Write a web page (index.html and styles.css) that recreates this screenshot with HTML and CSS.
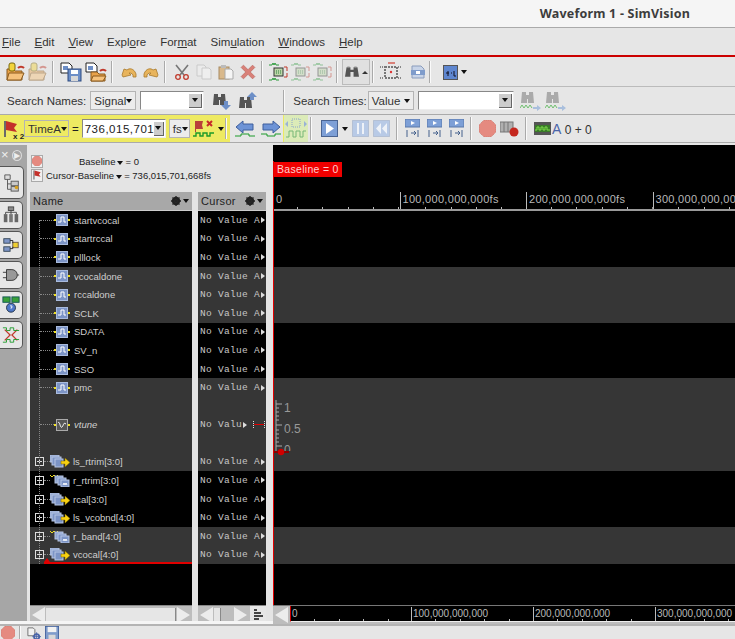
FILE: index.html
```html
<!DOCTYPE html>
<html lang="en">
<head>
  <meta charset="UTF-8" />
  <title>Waveform 1 - SimVision</title>
  <link rel="stylesheet" href="styles.css">
</head>
<body>
  <svg class="defs" xmlns="http://www.w3.org/2000/svg">
    <symbol id="i-open" viewBox="0 0 20 20"><path d="M1 7h6l2 2h7v9H1z" fill="#e9a24a" stroke="#8a5a1e"/><path d="M3 11h15l-3 7H1z" fill="#f6c27c" stroke="#8a5a1e"/><rect x="3" y="1" width="6" height="8" rx="2" fill="#f3d43c" stroke="#7a6a10"/><path d="M12 6a4 4 0 0 1 6 0" fill="none" stroke="#c0392b" stroke-width="2"/></symbol>
    <symbol id="i-save" viewBox="0 0 22 20"><path d="M1 1h8l3 3v7H1z" fill="#fff" stroke="#222"/><rect x="3" y="4" width="5" height="4" fill="#6d8fc7"/><rect x="8" y="7" width="13" height="12" fill="#6d8fc7" stroke="#2d4a80"/><rect x="11" y="8" width="7" height="4" fill="#fff"/><rect x="11" y="14" width="7" height="5" fill="#d8d8d8"/></symbol>
    <symbol id="i-savedb" viewBox="0 0 22 20"><path d="M1 1h8l3 3v6H1z" fill="#fff" stroke="#222"/><rect x="3" y="4" width="5" height="4" fill="#6d8fc7"/><path d="M6 10h6l2 2h6v7H6z" fill="#e9a24a" stroke="#8a5a1e"/><path d="M8 14h13l-3 5H6z" fill="#f6c27c" stroke="#8a5a1e"/><path d="M15 9a4 4 0 0 1 6 0" fill="none" stroke="#c0392b" stroke-width="2"/></symbol>
    <symbol id="i-undo" viewBox="0 0 16 12"><path d="M1 9l2-6 3 1C8 2 13 2 15 8v3h-3V9C11 7 9 7 8 7l2 2-8 2z" fill="#e8b45c" stroke="#a87a2c" stroke-width=".8"/></symbol>
    <symbol id="i-redo" viewBox="0 0 16 12"><path d="M15 9l-2-6-3 1C8 2 3 2 1 8v3h3V9c1-2 3-2 4-2L6 9l8 2z" fill="#e8b45c" stroke="#a87a2c" stroke-width=".8"/></symbol>
    <symbol id="i-cut" viewBox="0 0 16 16"><path d="M2 1l8 10M14 1L6 11" stroke="#777" stroke-width="1.6" fill="none"/><circle cx="4" cy="13" r="2.3" fill="none" stroke="#c0392b" stroke-width="1.3"/><circle cx="12" cy="13" r="2.3" fill="none" stroke="#c0392b" stroke-width="1.3"/></symbol>
    <symbol id="i-copy" viewBox="0 0 16 16"><path d="M1 1h7l2 2v9H1z" fill="#f2f2f2" stroke="#aaa"/><path d="M6 4h7l2 2v9H6z" fill="#f8f8f8" stroke="#aaa"/></symbol>
    <symbol id="i-paste" viewBox="0 0 16 16"><rect x="1" y="3" width="10" height="12" fill="#d9b98c" stroke="#a88a60"/><path d="M7 5h6l2 2v8H7z" fill="#f5f5f5" stroke="#aaa"/><rect x="3" y="1" width="5" height="3" fill="#bbb"/></symbol>
    <symbol id="i-del" viewBox="0 0 14 14"><path d="M1 3l2-2 4 4 4-4 2 2-4 4 4 4-2 2-4-4-4 4-2-2 4-4z" fill="#d98078" stroke="#b9645c" stroke-width=".6"/></symbol>
    <symbol id="i-sch" viewBox="0 0 19 20"><path d="M0 3h3l1-2 1 2 1-2 1 2h3M0 18h3l1-2 1 2 1-2 1 2h3" fill="none" stroke="#2a9a3a"/><rect x="5" y="6" width="9" height="8" fill="#bcd6a8" stroke="#333"/><path d="M7 9h5M7 11h5" stroke="#2a7a3a" stroke-dasharray="1 1"/><path d="M15 5h3v4M15 15h3v-4" fill="none" stroke="#c0392b"/></symbol>
    <symbol id="i-binoc" viewBox="0 0 18 16"><path d="M2 2h5v3h4V2h5l2 12h-7V8H7v6H0z" fill="#555"/><rect x="3" y="1" width="3" height="2" fill="#888"/><rect x="12" y="1" width="3" height="2" fill="#888"/></symbol>
    <symbol id="i-binocdown" viewBox="0 0 18 18"><path d="M1 2h4v3h3V2h4l1 11H7V8H6v5H0z" fill="#555"/><path d="M11 9h4v4h3l-5 5-5-5h3z" fill="#6d8fc7"/></symbol>
    <symbol id="i-binocup" viewBox="0 0 18 18"><path d="M1 5h4v3h3V5h4l1 11H7v-5H6v5H0z" fill="#555"/><path d="M11 8h4V5h3l-5-5-5 5h3z" fill="#6d8fc7"/></symbol>
    <symbol id="i-binocwave" viewBox="0 0 21 20"><path d="M2 1h4v3h3V1h4l1 11H8V8H7v4H1z" fill="#aaa"/><path d="M0 17l2-3 2 3 2-3 2 3 2-3 2 3" fill="none" stroke="#6fbf6f"/><path d="M13 16h4v-2l4 3-4 3v-2h-4z" fill="#a9bfdd"/></symbol>
    <symbol id="i-zoom" viewBox="0 0 22 20"><rect x="5" y="5" width="12" height="11" fill="none" stroke="#777" stroke-dasharray="2 1" stroke-width="2"/><rect x="8" y="0" width="7" height="2" fill="#d98078"/><circle cx="11" cy="10" r="1.2" fill="#d33"/><path d="M0 5h4M18 5h4M0 16h4M18 16h4" stroke="#888" stroke-dasharray="1 1" stroke-width="2"/></symbol>
    <symbol id="i-doc" viewBox="0 0 14 14"><path d="M1 1h9l3 3v9H1z" fill="#c8d4e8" stroke="#8a9cbc"/><rect x="0" y="5" width="14" height="5" fill="#7f9ccb"/><rect x="5" y="6" width="4" height="3" fill="#fff"/></symbol>
    <symbol id="i-tx" viewBox="0 0 15 15"><rect x=".5" y=".5" width="14" height="14" fill="#5e86cf" stroke="#555"/><path d="M3 8h3M5 6v5M8 8h1M11 6v5h2" stroke="#112" fill="none"/></symbol>
    <symbol id="i-flag" viewBox="0 0 15 18"><path d="M2 1v16" stroke="#6a6a6a" stroke-width="2"/><path d="M3 1l11 3-3 4 3 4-11-2z" fill="#c4302b"/></symbol>
    <symbol id="i-flagwave" viewBox="0 0 22 18"><path d="M2 1h8l-1 4 1 4H3v3H2z" fill="#b8403a"/><path d="M0 16h3v-3h4v3h3v-3h4v3h3v-3h4" fill="none" stroke="#1d9a2a" stroke-width="1.4"/><path d="M14 1l5 5m0-5l-5 5" stroke="#c62b2b" stroke-width="2"/></symbol>
    <symbol id="i-left" viewBox="0 0 20 18"><path d="M1 7l7-6v3h10v6H8v3z" fill="#6d93d6" stroke="#3f5f9c"/><path d="M0 16h6v-2h8v2h6" fill="none" stroke="#1d9a2a"/></symbol>
    <symbol id="i-right" viewBox="0 0 20 18"><path d="M19 7l-7-6v3H2v6h10v3z" fill="#6d93d6" stroke="#3f5f9c"/><path d="M0 14h6v2h8v-2h6" fill="none" stroke="#1d9a2a"/></symbol>
    <symbol id="i-scan" viewBox="0 0 22 22"><path d="M0 6l3-3v6zM22 6l-3-3v6z" fill="#9ab2d6"/><rect x="7" y="1" width="8" height="8" fill="none" stroke="#8aa4cc" stroke-dasharray="1 1"/><path d="M1 19h3v-6h4v6h3v-6h4v6h3v-6h3" fill="none" stroke="#77b777"/></symbol>
    <symbol id="i-play" viewBox="0 0 17 17"><rect x=".5" y=".5" width="16" height="16" fill="#7d9fd6" stroke="#4a6492"/><path d="M5 3l8 5.5L5 14z" fill="#fff"/></symbol>
    <symbol id="i-pause" viewBox="0 0 17 17"><rect x=".5" y=".5" width="16" height="16" fill="#b8cae6" stroke="#98a8c2" stroke-dasharray="1 1"/><path d="M5 3h2v11H5zM10 3h2v11h-2z" fill="#eef2f8"/></symbol>
    <symbol id="i-rew" viewBox="0 0 17 17"><rect x=".5" y=".5" width="16" height="16" fill="#b8cae6" stroke="#98a8c2" stroke-dasharray="1 1"/><path d="M8 3L3 8.5 8 14zM14 3L9 8.5l5 5.5z" fill="#eef2f8"/></symbol>
    <symbol id="i-step" viewBox="0 0 15 19"><rect x="0" y="0" width="15" height="8" fill="#7d9fd6" stroke="#5a78aa"/><path d="M6 2l4 2-4 2z" fill="#fff"/><path d="M2 11v7M13 11v7M6 14h5M9 12l2 2-2 2" stroke="#44608c" fill="none"/></symbol>
    <symbol id="i-rec" viewBox="0 0 17 17"><path d="M5 0h7l5 5v7l-5 5H5l-5-5V5z" fill="#e58a80" stroke="#cc7a70" stroke-dasharray="1 1"/></symbol>
    <symbol id="i-recdoc" viewBox="0 0 19 16"><rect x="0" y="1" width="13" height="10" fill="#b0b0b0" stroke="#777"/><path d="M4 1v10M8 1v10" stroke="#777"/><circle cx="14" cy="11" r="4.5" fill="#c5281f"/></symbol>
    <symbol id="i-wave" viewBox="0 0 17 13"><rect width="17" height="13" fill="#555"/><rect x="1" y="3" width="15" height="7" fill="#3a7a2a"/><path d="M1 8h2V5h2v3h2V5h2v3h2V5h2v3h3" fill="none" stroke="#7ee04a"/></symbol>
    <symbol id="i-gear" viewBox="0 0 10 10"><circle cx="5" cy="5" r="3" fill="none" stroke="#222" stroke-width="2.4"/><path d="M5 0v10M0 5h10M1.5 1.5l7 7M8.5 1.5l-7 7" stroke="#222" stroke-width="1.3"/></symbol>
    <symbol id="i-signal" viewBox="0 0 16 12"><rect x="2.5" y=".5" width="11" height="11" fill="#7c94c6" stroke="#a9bbdd"/><path d="M4 8h3V3h3v5h2" fill="none" stroke="#fff"/><rect x="0" y="5" width="2" height="2" fill="#f0e020"/><rect x="14" y="5" width="2" height="2" fill="#f0e020"/></symbol>
    <symbol id="i-analog" viewBox="0 0 16 12"><rect x="2.5" y=".5" width="11" height="11" fill="#555" stroke="#aaa"/><path d="M4 4c2-3 2 6 4 4s1-5 4-3" fill="none" stroke="#fff"/><rect x="0" y="5" width="2" height="2" fill="#f0e020"/><rect x="14" y="5" width="2" height="2" fill="#f0e020"/></symbol>
    <symbol id="i-bus" viewBox="0 0 20 13"><rect x="0" y="0" width="9" height="7" fill="#8fa5d0" stroke="#b7c6e4"/><rect x="2" y="2" width="9" height="8" fill="#7c94c6" stroke="#b7c6e4"/><rect x="5" y="4" width="8" height="8" fill="#7c94c6" stroke="#b7c6e4"/><path d="M11 6h4V3l5 4.5L15 12V9h-4z" fill="#f7d012" stroke="#7a6400" stroke-width=".5"/></symbol>
    <symbol id="i-busy" viewBox="0 0 20 13"><path d="M0 1l2 2 2-2 2 2 2-2" stroke="#f0e020" fill="none"/><rect x="5" y="2" width="8" height="7" fill="#8fa5d0" stroke="#b7c6e4"/><rect x="8" y="4" width="8" height="7" fill="#7c94c6" stroke="#b7c6e4"/><rect x="11" y="6" width="8" height="7" fill="#7c94c6" stroke="#b7c6e4"/><path d="M13 11l1-2 1 2 1-2 1 2" stroke="#fff" fill="none"/></symbol>
    <symbol id="i-floppy" viewBox="0 0 16 16"><rect x=".5" y=".5" width="15" height="15" fill="#7f9ccb" stroke="#3f5f9c"/><rect x="3" y="1" width="10" height="6" fill="#f2f2f2"/><rect x="4" y="10" width="8" height="6" fill="#d8d8d8"/></symbol>
    <symbol id="i-docgear" viewBox="0 0 16 16"><path d="M1 1h6l2 2v7H1z" fill="#f2f2f2" stroke="#666"/><circle cx="11" cy="11" r="3" fill="none" stroke="#4a64a8" stroke-width="2"/><path d="M11 6v10M6 11h10" stroke="#4a64a8"/></symbol>
    <symbol id="t-browser" viewBox="0 0 18 20"><path d="M1 1h6v5H1zM4 6v11h4M4 11h4" fill="#ddd" stroke="#555"/><rect x="8" y="8" width="8" height="5" fill="#c9c9c9" stroke="#555"/><rect x="8" y="14" width="8" height="5" fill="#c9c9c9" stroke="#555"/><circle cx="14" cy="15" r="2" fill="#d6a020"/></symbol>
    <symbol id="t-hier" viewBox="0 0 18 20"><rect x="6" y="1" width="6" height="4" fill="#888" stroke="#444"/><rect x="1" y="9" width="4" height="9" fill="#666"/><rect x="7" y="9" width="4" height="9" fill="#777"/><rect x="13" y="9" width="4" height="9" fill="#666"/><path d="M9 5v4M3 9V7h12v2" fill="none" stroke="#444"/></symbol>
    <symbol id="t-flow" viewBox="0 0 18 20"><rect x="1" y="3" width="7" height="5" fill="#7c94c6" stroke="#345"/><rect x="1" y="12" width="7" height="5" fill="#7c94c6" stroke="#345"/><rect x="11" y="7" width="6" height="6" fill="#f0d030" stroke="#654"/><path d="M8 5h3v3M8 14h3v-2" fill="none" stroke="#222"/></symbol>
    <symbol id="t-gate" viewBox="0 0 18 20"><path d="M4 4h6a6 6 0 0 1 0 12H4z" fill="#999" stroke="#333"/><path d="M0 7h4M0 13h4M16 10h2" stroke="#333"/></symbol>
    <symbol id="t-net" viewBox="0 0 18 20"><rect x="0" y="1" width="8" height="6" fill="#3aa03a" stroke="#155"/><rect x="10" y="1" width="8" height="6" fill="#3aa03a" stroke="#155"/><circle cx="9" cy="13" r="5" fill="#4f78c8" stroke="#234"/><path d="M8 11h2v2H9v1" stroke="#fff" fill="none"/></symbol>
    <symbol id="t-wave" viewBox="0 0 18 20"><path d="M2 4l6 6-6 6M16 4l-6 6 6 6" fill="none" stroke="#c0392b" stroke-width="1.4"/><path d="M0 18h4v-3h4v3h4v-3h6M0 2h4v3h4V2h4v3h6" fill="none" stroke="#1d9a2a"/></symbol>
  </svg>

  <div class="titlebar"><span class="title">Waveform 1 - SimVision</span></div>

  <div class="menubar">
    <span><u>F</u>ile</span><span><u>E</u>dit</span><span><u>V</u>iew</span><span>Expl<u>o</u>re</span><span>For<u>m</u>at</span><span>Sim<u>u</u>lation</span><span><u>W</u>indows</span><span><u>H</u>elp</span>
  </div>

  <div class="toolbar">
    <svg class="ic w20 tight"><use href="#i-open"/></svg>
    <svg class="ic w20 faded"><use href="#i-open"/></svg>
    <i class="sep"></i>
    <svg class="ic w22"><use href="#i-save"/></svg>
    <svg class="ic w22"><use href="#i-savedb"/></svg>
    <i class="sep"></i>
    <svg class="ic s16"><use href="#i-undo"/></svg>
    <svg class="ic s16"><use href="#i-redo"/></svg>
    <i class="sep"></i>
    <svg class="ic s16"><use href="#i-cut"/></svg>
    <svg class="ic s16 faded"><use href="#i-copy"/></svg>
    <svg class="ic s16"><use href="#i-paste"/></svg>
    <svg class="ic s16"><use href="#i-del"/></svg>
    <i class="sep"></i>
    <svg class="ic w19"><use href="#i-sch"/></svg>
    <svg class="ic w19 faded"><use href="#i-sch"/></svg>
    <svg class="ic w19 faded"><use href="#i-sch"/></svg>
    <i class="sep"></i>
    <span class="pressed"><svg class="ic s14"><use href="#i-binoc"/></svg><b class="up"></b></span>
    <i class="sep"></i>
    <svg class="ic w22"><use href="#i-zoom"/></svg>
    <svg class="ic s14 pushed"><use href="#i-doc"/></svg>
    <i class="sep"></i>
    <svg class="ic s15 pushed"><use href="#i-tx"/></svg>
    <b class="caret"></b>
  </div>

  <div class="searchbar">
    <span class="lbl">Search Names:</span>
    <span class="combo narrow">Signal<b class="caret"></b></span>
    <span class="entry e-names"><b class="drop"><b class="caret"></b></b></span>
    <svg class="ic s18"><use href="#i-binocdown"/></svg>
    <svg class="ic s18"><use href="#i-binocup"/></svg>
    <i class="sep gap-names"></i>
    <span class="lbl">Search Times:</span>
    <span class="combo narrow pull">Value<b class="caret"></b></span>
    <span class="entry e-times"><b class="drop"><b class="caret"></b></b></span>
    <svg class="ic w21"><use href="#i-binocwave"/></svg>
    <svg class="ic w21"><use href="#i-binocwave"/></svg>
  </div>

  <div class="timebar">
    <div class="yellow">
      <span class="flag"><svg class="ic w15"><use href="#i-flag"/></svg><small>x 2</small></span>
      <span class="combo timea">TimeA<b class="caret"></b></span>
      <span class="eq">=</span>
      <span class="entry e-time">736,015,701<b class="drop"><b class="caret"></b></b></span>
      <span class="combo unit">fs<b class="caret"></b></span>
      <svg class="ic w22"><use href="#i-flagwave"/></svg>
      <b class="caret"></b>
      <i class="sep"></i>
      <span class="arrows"><svg class="ic w20"><use href="#i-left"/></svg><svg class="ic w20"><use href="#i-right"/></svg></span>
      <span class="scan"><svg class="ic s22"><use href="#i-scan"/></svg></span>
    </div>
    <i class="sep"></i>
    <div class="transport">
      <svg class="ic s17"><use href="#i-play"/></svg><b class="caret"></b>
      <svg class="ic s17"><use href="#i-pause"/></svg>
      <svg class="ic s17"><use href="#i-rew"/></svg>
      <i class="sep"></i>
      <svg class="ic w15h"><use href="#i-step"/></svg>
      <svg class="ic w15h"><use href="#i-step"/></svg>
      <svg class="ic w15h"><use href="#i-step"/></svg>
      <i class="sep"></i>
      <svg class="ic s17"><use href="#i-rec"/></svg>
      <svg class="ic w19s"><use href="#i-recdoc"/></svg>
      <i class="sep"></i>
      <svg class="ic w17w"><use href="#i-wave"/></svg>
      <span class="count"><em>A</em> 0 + 0</span>
    </div>
  </div>

  <div class="main">
    <div class="sidetabs">
      <div class="closers">× <span class="dot">▶</span></div>
      <div class="tab active"><svg class="ic s18"><use href="#t-browser"/></svg></div>
      <div class="tab"><svg class="ic s18"><use href="#t-hier"/></svg></div>
      <div class="tab"><svg class="ic s18"><use href="#t-flow"/></svg></div>
      <div class="tab"><svg class="ic s18"><use href="#t-gate"/></svg></div>
      <div class="tab"><svg class="ic s18"><use href="#t-net"/></svg></div>
      <div class="tab"><svg class="ic s18"><use href="#t-wave"/></svg></div>
    </div>

    <div class="sigpane">
      <div class="baseinfo">
        <div class="baseline"><span class="tool"><svg class="ic s10"><use href="#i-rec"/></svg></span><span class="base-a">Baseline<b class="caret"></b>= 0</span></div>
        <div class="baseline"><span class="tool"><svg class="ic s10"><use href="#i-flag"/></svg></span><span>Cursor-Baseline<b class="caret"></b>= 736,015,701,668fs</span></div>
      </div>
      <div class="cols">
        <div class="col namecol">
          <div class="colhead"><span>Name</span><span class="opts"><svg class="ic s10"><use href="#i-gear"/></svg><b class="caret"></b></span></div>
          <div class="list names">
            <div class="row"><i class="dots"></i><svg class="sig"><use href="#i-signal"/></svg>startvcocal</div>
            <div class="row"><i class="dots"></i><svg class="sig"><use href="#i-signal"/></svg>startrccal</div>
            <div class="row"><i class="dots"></i><svg class="sig"><use href="#i-signal"/></svg>plllock</div>
            <div class="row band"><i class="dots"></i><svg class="sig"><use href="#i-signal"/></svg>vcocaldone</div>
            <div class="row band"><i class="dots"></i><svg class="sig"><use href="#i-signal"/></svg>rccaldone</div>
            <div class="row band"><i class="dots"></i><svg class="sig"><use href="#i-signal"/></svg>SCLK</div>
            <div class="row"><i class="dots"></i><svg class="sig"><use href="#i-signal"/></svg>SDATA</div>
            <div class="row"><i class="dots"></i><svg class="sig"><use href="#i-signal"/></svg>SV_n</div>
            <div class="row"><i class="dots"></i><svg class="sig"><use href="#i-signal"/></svg>SSO</div>
            <div class="row band"><i class="dots"></i><svg class="sig"><use href="#i-signal"/></svg>pmc</div>
            <div class="row band tall"><i class="dots"></i><svg class="sig"><use href="#i-analog"/></svg><em>vtune</em></div>
            <div class="row band bus"><i class="plus"></i><i class="dots short"></i><svg class="busi"><use href="#i-bus"/></svg>ls_rtrim[3:0]</div>
            <div class="row bus"><i class="plus"></i><i class="dots short"></i><svg class="busi"><use href="#i-busy"/></svg>r_rtrim[3:0]</div>
            <div class="row bus"><i class="plus"></i><i class="dots short"></i><svg class="busi"><use href="#i-bus"/></svg>rcal[3:0]</div>
            <div class="row bus"><i class="plus"></i><i class="dots short"></i><svg class="busi"><use href="#i-bus"/></svg>ls_vcobnd[4:0]</div>
            <div class="row band bus"><i class="plus"></i><i class="dots short"></i><svg class="busi"><use href="#i-busy"/></svg>r_band[4:0]</div>
            <div class="row band bus"><i class="plus"></i><i class="dots short"></i><svg class="busi"><use href="#i-bus"/></svg>vcocal[4:0]</div>
            <div class="marker"></div>
          </div>
          <div class="hscroll"><b class="tri-l"></b><span class="thumb"></span><b class="tri-r"></b></div>
        </div>
        <div class="col cursorcol">
          <div class="colhead"><span>Cursor</span><span class="opts"><svg class="ic s10"><use href="#i-gear"/></svg><b class="caret"></b></span></div>
          <div class="list values">
            <div class="row">No Value A<b class="more"></b></div>
            <div class="row">No Value A<b class="more"></b></div>
            <div class="row">No Value A<b class="more"></b></div>
            <div class="row band">No Value A<b class="more"></b></div>
            <div class="row band">No Value A<b class="more"></b></div>
            <div class="row band">No Value A<b class="more"></b></div>
            <div class="row">No Value A<b class="more"></b></div>
            <div class="row">No Value A<b class="more"></b></div>
            <div class="row">No Value A<b class="more"></b></div>
            <div class="row band">No Value A<b class="more"></b></div>
            <div class="row band tall">No Valu<b class="more"></b><i class="mini"></i></div>
            <div class="row band">No Value A<b class="more"></b></div>
            <div class="row">No Value A<b class="more"></b></div>
            <div class="row">No Value A<b class="more"></b></div>
            <div class="row">No Value A<b class="more"></b></div>
            <div class="row band">No Value A<b class="more"></b></div>
            <div class="row band">No Value A<b class="more"></b></div>
          </div>
          <div class="hscroll short-bar"><b class="tri-l"></b><span class="thumb tiny"></span><b class="tri-r"></b><span class="sorter"><i></i><i></i><i></i><i></i></span></div>
        </div>
      </div>
    </div>

    <div class="wavepane">
      <div class="wavehead">
        <div class="baselabel">Baseline = 0</div>
        <div class="ruler">
          <span class="seg first">0</span>
          <span class="seg">100,000,000,000fs</span>
          <span class="seg">200,000,000,000fs</span>
          <span class="seg">300,000,000,000fs</span>
        </div>
      </div>
      <div class="tracks">
        <div class="track n3"></div>
        <div class="track n3 band"></div>
        <div class="track n3"></div>
        <div class="track n5 band"></div>
        <div class="track n3"></div>
        <div class="track n2 band"></div>
        <svg class="axis" viewBox="0 0 40 62">
          <path d="M1 4v52M1 8h6M1 12h3M1 16h3M1 20h3M1 24h3M1 29h6M1 34h3M1 38h3M1 42h3M1 46h3M1 50h6" fill="none" stroke="#aaa"/>
          <text x="9" y="16">1</text><text x="9" y="37">0.5</text><text x="9" y="58">0</text>
          <rect x="8" y="55" width="12" height="8" fill="#363636"/>
          <path d="M-2 56h16" stroke="#8a0000" stroke-width="2"/><circle cx="6" cy="56" r="3.2" fill="#d00000"/>
        </svg>
      </div>
      <div class="cursorline"></div>
      <div class="timescroll">
        <b class="tri-l"></b>
        <div class="ruler lower">
          <span class="seg first">0</span>
          <span class="seg">100,000,000,000</span>
          <span class="seg">200,000,000,000</span>
          <span class="seg">300,000,000,000</span>
        </div>
      </div>
    </div>
  </div>

  <div class="statusbar">
    <svg class="ic s14"><use href="#i-rec"/></svg>
    <i class="sep"></i>
    <svg class="ic s14 status-gear"><use href="#i-docgear"/></svg>
    <svg class="ic s14"><use href="#i-floppy"/></svg>
  </div>
</body>
</html>
```

FILE: styles.css
```css
html, body {
  margin: 0;
  padding: 0;
}
body {
  width: 735px;
  height: 639px;
  overflow: hidden;
  display: flex;
  flex-direction: column;
  background: #e6e6e6;
  color: #222;
  font-family: "Liberation Sans", Arial, sans-serif;
  font-size: 11.5px;
}
.defs {
  display: none;
}
.ic {
  display: block;
  flex: none;
}
.faded { opacity: .45; }
.w20 { width: 20px; height: 20px; }
.w22 { width: 22px; height: 20px; }
.w19 { width: 19px; height: 20px; }
.w21 { width: 21px; height: 20px; }
.w15 { width: 15px; height: 18px; }
.w15h { width: 15px; height: 19px; }
.w19s { width: 19px; height: 16px; }
.w17w { width: 17px; height: 13px; }
.s10 { width: 10px; height: 10px; }
.s14 { width: 14px; height: 14px; }
.s15 { width: 15px; height: 15px; }
.s16 { width: 16px; height: 16px; }
.s17 { width: 17px; height: 17px; }
.s18 { width: 18px; height: 18px; }
.s22 { width: 22px; height: 22px; }

.caret {
  display: inline-block;
  width: 0;
  height: 0;
  border-left: 3.5px solid transparent;
  border-right: 3.5px solid transparent;
  border-top: 4px solid #111;
  flex: none;
}
.sep {
  display: block;
  flex: none;
  width: 1px;
  align-self: stretch;
  margin: 2px 0;
  background: #aaa;
  border-right: 1px solid #fafafa;
}

/* title and menu */
.titlebar {
  height: 27px;
  flex: none;
  background: #f5f5f5;
  border-bottom: 1px solid #aaa;
  display: flex;
  justify-content: flex-end;
  align-items: center;
  padding-right: 45px;
}
.title {
  font-family: "Noto Sans", sans-serif;
  font-size: 12.5px;
  font-weight: 700;
  color: #3c3c3c;
  letter-spacing: .2px;
}
.menubar {
  height: 27px;
  flex: none;
  display: flex;
  align-items: center;
  padding-left: 2px;
  gap: 14px;
  color: #333;
  border-bottom: 2px solid #cc0000;
}

/* toolbars */
.toolbar {
  height: 29px;
  flex: none;
  margin-top: 1px;
  display: flex;
  align-items: center;
  gap: 3px;
  padding-left: 6px;
  box-sizing: border-box;
  border-bottom: 1px solid #bbb;
}
.toolbar .tight { margin-right: -1px; }
.toolbar .sep { margin: 3px 3px 3px 1px; }
.toolbar .s16 { margin: 0 1.5px; }
.toolbar .pushed { margin-left: 6px; }
.pressed {
  display: flex;
  align-items: center;
  gap: 3px;
  height: 24px;
  padding: 0 1px 0 2px;
  margin: 0 -2px;
  border: 1px solid #bbb;
  background: #e0e0e0;
}
.up {
  width: 0;
  height: 0;
  border-left: 3px solid transparent;
  border-right: 3px solid transparent;
  border-bottom: 3px solid #333;
}
.searchbar {
  height: 28px;
  flex: none;
  display: flex;
  align-items: center;
  gap: 4px;
  padding-left: 7px;
  box-sizing: border-box;
  border-bottom: 1px solid #aaa;
}
.lbl {
  color: #333;
}
.combo {
  display: flex;
  align-items: center;
  justify-content: space-between;
  height: 17px;
  padding: 0 3px;
  background: #ececec;
  border: 1px solid #b4b4b4;
  box-sizing: content-box;
  color: #333;
}
.narrow { width: 38px; }
.pull { margin-left: -3px; }
.entry {
  display: flex;
  align-items: center;
  height: 17px;
  background: #fff;
  border-top: 1px solid #888;
  border-left: 1px solid #888;
  border-right: 1px solid #eee;
  border-bottom: 1px solid #eee;
  padding-left: 2px;
  color: #222;
}
.drop {
  width: 12px;
  height: 13px;
  margin: 0 1px 0 auto;
  display: flex;
  align-items: center;
  justify-content: center;
  background: #ccc;
  border-right: 1px solid #666;
  border-bottom: 1px solid #666;
}
.e-names { width: 60px; }
.e-names + .ic { margin-left: 5px; }
.e-names + .ic + .ic { margin-left: 4px; }
.e-times { width: 92px; }
.e-times + .ic { margin-left: 2px; }
.gap-names { margin: 3px 4px 3px 22px; height: 22px; }
.timebar {
  height: 28px;
  flex: none;
  display: flex;
  align-items: stretch;
  box-sizing: border-box;
  border-bottom: 1px solid #aaa;
}
.yellow {
  width: 308px;
  flex: none;
  background: #eeea62;
  display: flex;
  align-items: center;
  gap: 3px;
  padding-left: 3px;
  box-sizing: border-box;
}
.flag {
  position: relative;
  width: 18px;
  flex: none;
}
.flag small {
  position: absolute;
  left: 10px;
  top: 12px;
  font-size: 8px;
  font-weight: 700;
  white-space: nowrap;
}
.timea {
  width: 37px;
  background: #eeea62;
  height: 15px;
}
.e-time {
  width: 80px;
  letter-spacing: .5px;
}
.unit { width: 13px; }
.arrows {
  display: flex;
  align-items: center;
  gap: 6px;
  height: 27px;
  padding: 0 2px 0 5px;
  background: #e6e6e6;
}
.scan {
  height: 27px;
  padding: 0 1px;
  margin-left: -2px;
  display: flex;
  align-items: center;
  background: #dcebb8;
}
.yellow .sep { margin: 3px 0 3px -2px; }
.timebar > .sep { margin: 2px 1px 2px 2px; }
.transport {
  display: flex;
  align-items: center;
  gap: 4px;
  padding-left: 8px;
}
.transport .sep { margin: 2px 3px 2px 2px; }
.transport .w15h + .w15h { margin-left: 3px; }
.count {
  color: #333;
  margin-left: -3px;
  font-size: 12px;
}
.count em {
  font-style: normal;
  font-size: 14px;
  color: #4a64a8;
}

/* main area */
.main {
  flex: 1;
  min-height: 0;
  display: flex;
  margin-top: 2px;
  background: #e4e4e4;
}
.sidetabs {
  width: 27px;
  flex: none;
  background: #a6a6a6;
  box-sizing: border-box;
  padding-bottom: 30px;
}
.closers {
  height: 21px;
  color: #eee;
  font-size: 13px;
  padding-left: 1px;
  line-height: 20px;
}
.closers .dot {
  font-size: 8px;
  border: 1px solid #ddd;
  border-radius: 50%;
  padding: 0 1px;
  vertical-align: 1px;
}
.tab {
  height: 26px;
  width: 22px;
  margin-bottom: 2px;
  display: flex;
  align-items: center;
  justify-content: center;
  background: #e6e6e6;
  border: 1px solid #555;
  border-left: none;
  border-radius: 0 5px 5px 0;
}
.tab.active {
  height: 31px;
  width: 23px;
}
.sigpane {
  width: 246px;
  flex: none;
  display: flex;
  flex-direction: column;
}
.baseinfo {
  height: 47px;
  flex: none;
  padding: 9px 0 0 4px;
  box-sizing: border-box;
  font-size: 9.5px;
  color: #222;
}
.baseline {
  display: flex;
  align-items: center;
  height: 14px;
}
.tool {
  width: 12px;
  height: 13px;
  margin-right: 3px;
  display: flex;
  align-items: center;
  justify-content: center;
  background: #f0f0f0;
  border: 1px solid #aaa;
  box-sizing: border-box;
}
.base-a { margin-left: 33px; }
.baseline .caret { margin: 0 2px; }
.cols {
  flex: 1;
  min-height: 0;
  display: flex;
  padding-left: 3px;
  gap: 6px;
}
.col {
  display: flex;
  flex-direction: column;
}
.namecol { width: 162px; }
.cursorcol { width: 68px; }
.colhead {
  height: 18px;
  flex: none;
  display: flex;
  align-items: center;
  justify-content: space-between;
  padding: 0 3px;
  background: #a8a8a8;
  color: #222;
  font-size: 11px;
  letter-spacing: .3px;
  border-bottom: 1px solid #ccc;
}
.opts {
  display: flex;
  align-items: center;
  gap: 2px;
}
.list {
  flex: 1;
  min-height: 0;
  background: #000;
  position: relative;
}
.row {
  height: 18.6px;
  display: flex;
  align-items: center;
  box-sizing: border-box;
  color: #cfcfcf;
  font-size: 9.5px;
}
.band { background: #363636; }
.row.tall { height: 55.6px; }
.names::before {
  content: "";
  position: absolute;
  left: 9px;
  top: 9px;
  height: 344px;
  border-left: 1px dotted #888;
}
.dots {
  display: block;
  width: 14px;
  margin-left: 10px;
  border-top: 1px dotted #888;
}
.dots.short {
  width: 6px;
  margin-left: 0;
}
.sig {
  width: 16px;
  height: 12px;
  margin-right: 4px;
  flex: none;
}
.busi {
  width: 20px;
  height: 13px;
  margin: 0 3px 0 0;
  flex: none;
}
.plus {
  display: block;
  flex: none;
  box-sizing: border-box;
  width: 9px;
  height: 9px;
  margin-left: 5px;
  background:
    linear-gradient(#ddd, #ddd) center / 5px 1px no-repeat,
    linear-gradient(#ddd, #ddd) center / 1px 5px no-repeat;
  border: 1px solid #ddd;
}
.marker {
  position: absolute;
  left: 14px;
  right: 0;
  top: 351px;
  height: 2px;
  background: #e00000;
}
.marker::before {
  content: "";
  position: absolute;
  left: 0;
  top: -4px;
  border-left: 3px solid transparent;
  border-right: 3px solid transparent;
  border-bottom: 4px solid #e00000;
}
.values .row {
  font-family: "Liberation Mono", monospace;
  font-size: 9.5px;
  color: #c8c8c8;
  padding-left: 2px;
  letter-spacing: .3px;
  white-space: nowrap;
}
.more {
  width: 0;
  height: 0;
  margin-left: 1px;
  border-top: 3px solid transparent;
  border-bottom: 3px solid transparent;
  border-left: 4px solid #ddd;
}
.mini {
  display: block;
  width: 10px;
  height: 7px;
  margin-left: 6px;
  border-left: 1px dotted #ddd;
  border-right: 1px dotted #ddd;
  background: linear-gradient(#e00000, #e00000) center / 100% 1px no-repeat;
}
.hscroll {
  height: 17px;
  flex: none;
  display: flex;
  align-items: center;
  background: #bdbdbd;
  border-top: 1px solid #888;
  border-bottom: 1px solid #fff;
}
.tri-l, .tri-r {
  width: 0;
  height: 0;
  flex: none;
  border-top: 8px solid transparent;
  border-bottom: 8px solid transparent;
}
.tri-l {
  margin: 0 1px 0 2px;
  border-right: 13px solid #ececec;
}
.tri-r {
  margin: 0 2px 0 1px;
  border-left: 13px solid #ececec;
}
.thumb {
  flex: 1;
  height: 14px;
  background: #e6e6e6;
  border-right: 1px solid #888;
  border-bottom: 1px solid #888;
  box-sizing: border-box;
}
.thumb.tiny {
  flex: none;
  width: 7px;
  margin-right: 12px;
}
.short-bar .tri-l { margin-left: 2px; }
.sorter {
  margin-left: auto;
  width: 16px;
  height: 17px;
  background: #e6e6e6;
  display: flex;
  flex-direction: column;
  justify-content: center;
  gap: 1px;
  padding-left: 4px;
  box-sizing: border-box;
}
.sorter i {
  display: block;
  height: 2px;
  width: 9px;
  background: #444;
}
.sorter i:nth-child(1) { width: 3px; }
.sorter i:nth-child(2) { width: 7px; }
.sorter i:nth-child(4) { width: 5px; }

/* wave pane */
.wavepane {
  flex: 1;
  min-width: 0;
  background: #000;
  display: flex;
  flex-direction: column;
  position: relative;
  overflow: hidden;
}
.wavehead {
  height: 66px;
  flex: none;
  display: flex;
  flex-direction: column;
  justify-content: flex-end;
}
.baselabel {
  width: 68px;
  height: 15px;
  line-height: 15px;
  margin: 0 0 15px 1px;
  padding-left: 3px;
  box-sizing: border-box;
  background: #f00000;
  color: #ffd0d0;
  font-size: 10.5px;
  letter-spacing: .3px;
  white-space: nowrap;
}
.ruler {
  display: flex;
  height: 17px;
  flex: none;
  border-bottom: 2px solid #9a9a9a;
  color: #b8b8b8;
  font-size: 11px;
  letter-spacing: .3px;
  overflow: hidden;
}
.seg {
  flex: none;
  width: 126.5px;
  box-sizing: border-box;
  padding-left: 2px;
  border-left: 1px solid #bbb;
  white-space: nowrap;
  line-height: 15px;
  background: repeating-linear-gradient(90deg, transparent 0 24.3px, #bbb 24.3px 25.3px) bottom / 100% 2px no-repeat;
}
.seg.first {
  border-left: none;
  padding-left: 3px;
}
.tracks {
  flex: 1;
  min-height: 0;
  position: relative;
}
.track.n2 { height: 37.2px; }
.track.n3 { height: 55.8px; }
.track.n5 { height: 92.8px; }
.axis {
  position: absolute;
  left: 2px;
  top: 185px;
  width: 40px;
  height: 62px;
  overflow: visible;
}
.axis text {
  font-family: "Liberation Sans", sans-serif;
  font-size: 12px;
  fill: #999;
}
.cursorline {
  position: absolute;
  left: 0;
  top: 16px;
  bottom: 19px;
  width: 1px;
  background: #e00000;
}
.timescroll {
  height: 19px;
  flex: none;
  display: flex;
  background: #bdbdbd;
  border-top: 1px solid #777;
  box-sizing: border-box;
  position: relative;
}
.timescroll .tri-l { margin: 1px 2px 0 2px; }
.lower {
  flex: 1;
  min-width: 0;
  background: #000;
  height: 16px;
  border-bottom: 1px solid #eee;
  border-left: 1px solid #d00000;
  font-size: 10px;
  letter-spacing: 0;
  padding-top: 1px;
  box-sizing: border-box;
}
.lower .seg {
  width: 122px;
  padding-left: 1px;
  line-height: 13px;
  background: repeating-linear-gradient(90deg, transparent 0 23.4px, #bbb 23.4px 24.4px) bottom / 100% 2px no-repeat;
}
.lower .seg.first {
  width: 120px;
  padding-left: 1px;
}
.statusbar {
  height: 13px;
  flex: none;
  display: flex;
  align-items: flex-start;
  gap: 4px;
  padding-left: 1px;
  border-top: 2px solid #b4b4b4;
  box-shadow: 0 -3px 0 #f5f5f5;
  background: #e6e6e6;
  overflow: hidden;
}
.statusbar .sep { margin: 0 2px 0 0; }
.status-gear { margin-top: 1px; }
```
